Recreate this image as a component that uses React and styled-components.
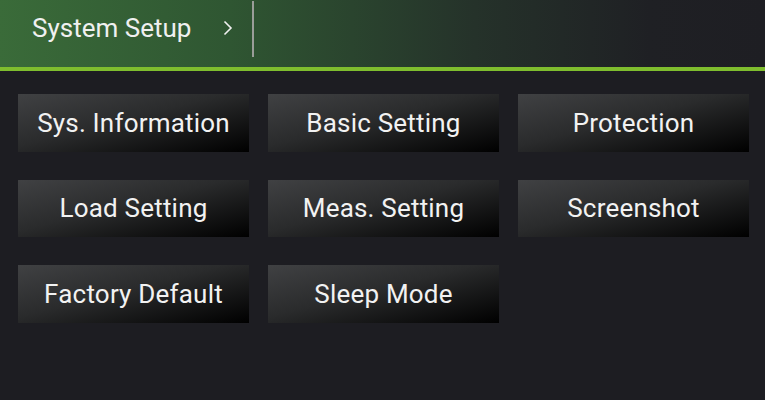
import React from 'react';
import styled, { createGlobalStyle } from 'styled-components';

const Global = createGlobalStyle`
  html, body {
    margin: 0;
    padding: 0;
    background: #1d1d22;
  }
  body {
    font-family: Roboto, "Liberation Sans", sans-serif;
  }
`;

const Screen = styled.div`
  width: 765px;
  height: 400px;
  background: #1d1d22;
  overflow: hidden;
`;

const Header = styled.div`
  height: 71px;
  box-sizing: border-box;
  padding-bottom: 12px;
  display: flex;
  align-items: center;
  position: relative;
  background: linear-gradient(to right, #3a6b39 0%, #2f5632 30%, #25322a 62%, #1f2024 85%, #1e1e23 100%);
  border-bottom: 4px solid #7fbd2e;
`;

const Title = styled.div`
  color: #f0f0f0;
  font-size: 26px;
  padding-left: 32px;
  width: 191px;
  letter-spacing: 0;
`;

const Chevron = styled.svg`
  width: 10px;
  height: 16px;
`;

const Divider = styled.div`
  position: absolute;
  left: 252px;
  top: 1px;
  width: 2px;
  height: 56px;
  background: #9a9d99;
`;

const Grid = styled.div`
  display: grid;
  grid-template-columns: repeat(3, 231px);
  grid-auto-rows: 57.5px;
  column-gap: 19px;
  row-gap: 28px;
  padding: 23px 0 0 18px;
`;

const Tile = styled.button`
  border: none;
  border-radius: 0;
  padding: 0;
  margin: 0;
  background: linear-gradient(to bottom right, #404143 0%, #2a2b2c 45%, #000000 100%);
  color: #f2f2f2;
  font-family: Roboto, "Liberation Sans", sans-serif;
  font-size: 26px;
  letter-spacing: 0.2px;
  display: flex;
  align-items: center;
  justify-content: center;
`;

const items = [
  'Sys. Information',
  'Basic Setting',
  'Protection',
  'Load Setting',
  'Meas. Setting',
  'Screenshot',
  'Factory Default',
  'Sleep Mode',
];

export default function App() {
  return (
    <Screen>
      <Global />
      <Header>
        <Title>System Setup</Title>
        <Chevron viewBox="0 0 10 16">
          <polyline points="1.5,1.5 8,8 1.5,14.5" fill="none" stroke="#f0f0f0" strokeWidth="1.6" />
        </Chevron>
        <Divider />
      </Header>
      <Grid>
        {items.map(t => (
          <Tile key={t}>{t}</Tile>
        ))}
      </Grid>
    </Screen>
  );
}
